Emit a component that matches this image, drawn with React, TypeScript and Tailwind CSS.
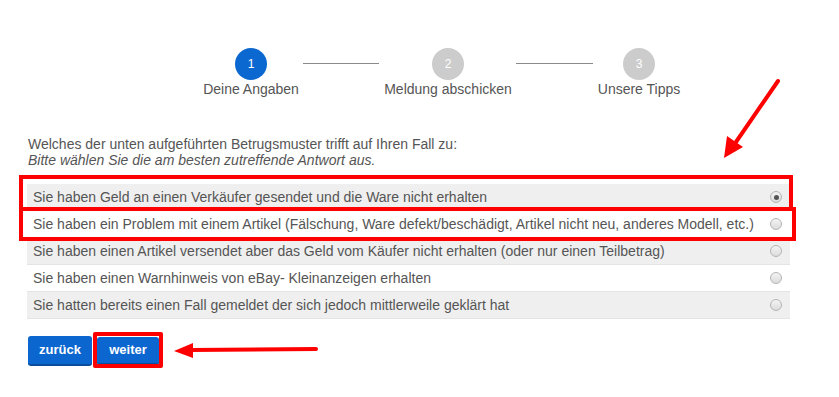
import React from 'react'

const STEPS = [
  { n: 1, label: 'Deine Angaben', active: true },
  { n: 2, label: 'Meldung abschicken', active: false },
  { n: 3, label: 'Unsere Tipps', active: false },
]

const OPTIONS = [
  'Sie haben Geld an einen Verkäufer gesendet und die Ware nicht erhalten',
  'Sie haben ein Problem mit einem Artikel (Fälschung, Ware defekt/beschädigt, Artikel nicht neu, anderes Modell, etc.)',
  'Sie haben einen Artikel versendet aber das Geld vom Käufer nicht erhalten (oder nur einen Teilbetrag)',
  'Sie haben einen Warnhinweis von eBay- Kleinanzeigen erhalten',
  'Sie hatten bereits einen Fall gemeldet der sich jedoch mittlerweile geklärt hat',
]

function Step({ n, label, active }: { n: number; label: string; active: boolean }) {
  return (
    <div className="flex w-8 flex-col items-center">
      <div
        className={`flex h-8 w-8 items-center justify-center rounded-full text-[12px] text-white ${
          active ? 'bg-[#0b68d1]' : 'bg-[#cccccc]'
        }`}
      >
        {n}
      </div>
      <div className="mt-[1px] whitespace-nowrap text-[14px] leading-4 text-[#555]">{label}</div>
    </div>
  )
}

function Radio({ checked }: { checked: boolean }) {
  return (
    <div className="flex h-[12px] w-[12px] items-center justify-center rounded-full border border-[#b5b5b5] bg-gradient-to-b from-[#f4f4f4] to-[#dcdcdc]">
      {checked && <div className="h-[5px] w-[5px] rounded-full bg-[#555]" />}
    </div>
  )
}

export default function App() {
  return (
    <div
      className="relative h-[397px] w-[839px] overflow-hidden bg-white"
      style={{ fontFamily: '"Liberation Sans", Arial, sans-serif' }}
    >
      <div className="flex flex-col pl-[27px] pt-[48px]">
        {/* stepper */}
        <div className="ml-[208px] flex items-start">
          <Step {...STEPS[0]} />
          <div className="mx-[36px] mt-[15px] h-[1px] w-[76px] bg-[#8a8a8a]" />
          <div className="ml-[17px]">
            <Step {...STEPS[1]} />
          </div>
          <div className="ml-[52px] mr-[30px] mt-[15px] h-[1px] w-[77px] bg-[#8a8a8a]" />
          <Step {...STEPS[2]} />
        </div>

        {/* question */}
        <div className="mt-[39px] pl-[1px] text-[14px] leading-[16px] text-[#555]">
          <div>Welches der unten aufgeführten Betrugsmuster trifft auf Ihren Fall zu:</div>
          <div className="italic">Bitte wählen Sie die am besten zutreffende Antwort aus.</div>
        </div>

        {/* options */}
        <div className="mt-[16px] flex w-[763px] flex-col">
          {OPTIONS.map((o, i) => (
            <div
              key={i}
              className={`flex h-[27px] items-center justify-between border-b border-[#e4e4e4] pl-[6px] pr-[8px] text-[14px] text-[#555] ${
                i % 2 === 0 ? 'bg-[#efefef]' : 'bg-white'
              }`}
            >
              <span>{o}</span>
              <Radio checked={i === 0} />
            </div>
          ))}
        </div>

        {/* buttons */}
        <div className="mt-[17px] flex items-center gap-[5px] pl-[1px]">
          <button className="h-[30px] w-[64px] rounded-[3px] border-b-2 border-[#0a4d9c] bg-[#0b66d0] text-[13px] font-bold text-white">
            zurück
          </button>
          <button className="h-[28px] w-[62px] rounded-[3px] border-b-2 border-[#0a4d9c] bg-[#0b66d0] text-[13px] font-bold text-white">
            weiter
          </button>
        </div>
      </div>

      {/* annotations */}
      <div className="absolute left-[19px] top-[175px] h-[36px] w-[774px] border-4 border-[#ff0000]" />
      <div className="absolute left-[19px] top-[207px] h-[34px] w-[777px] border-4 border-[#ff0000]" />
      <div className="absolute left-[93px] top-[332px] h-[36px] w-[70px] rounded-[2px] border-4 border-[#ff0000]" />

      <svg className="absolute left-0 top-0" width="839" height="397">
        <line x1="778" y1="81" x2="736" y2="142" stroke="#ff0000" strokeWidth="4" strokeLinecap="round" />
        <polygon points="724,158 727,136 743,147" fill="#ff0000" />
        <line x1="316" y1="349" x2="190" y2="350" stroke="#ff0000" strokeWidth="4" strokeLinecap="round" />
        <polygon points="174,351 193,343 193,358" fill="#ff0000" />
      </svg>
    </div>
  )
}
